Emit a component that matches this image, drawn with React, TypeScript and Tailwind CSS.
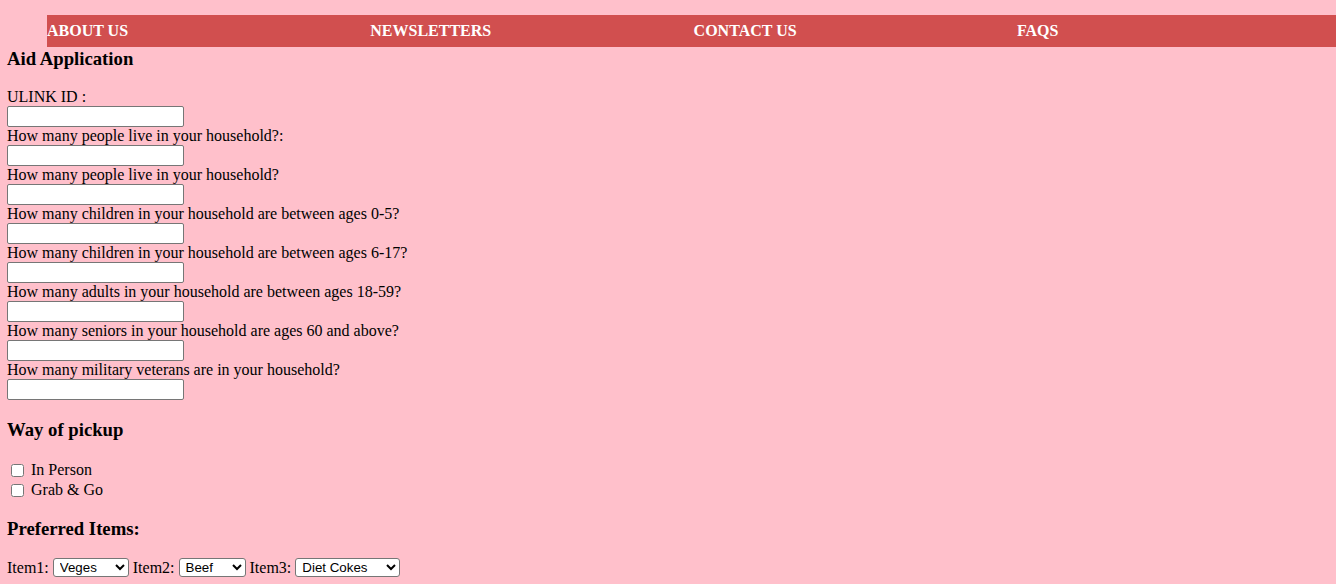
import React from 'react';

const navItems = ['ABOUT US', 'NEWSLETTERS', 'CONTACT US', 'FAQS'];

const questions = [
    'ULINK ID :',
    'How many people live in your household?:',
    'How many people live in your household?',
    'How many children in your household are between ages 0-5?',
    'How many children in your household are between ages 6-17?',
    'How many adults in your household are between ages 18-59?',
    'How many seniors in your household are ages 60 and above?',
    'How many military veterans are in your household?',
];

const Heading: React.FC<{ children: React.ReactNode; className?: string }> = ({ children, className = '' }) => (
    <h3 className={`text-[18.72px] font-bold leading-[21.5px] ${className}`}>{children}</h3>
);

const selectCls =
    'h-[19px] bg-white border border-[#767676] rounded-[3px] pl-[2px] text-[13.33px] text-black font-["Liberation_Sans",Arial,sans-serif] outline-none';

export default function App() {
    return (
        <div className="min-h-screen bg-[#ffc0cb] pl-[7px] pt-[15px] text-black font-['Liberation_Serif','Times_New_Roman',serif] text-[16px] leading-[18px]">
            <ul className="ml-[40px] flex h-[32px] items-center bg-[#d14f4f]">
                {navItems.map((item) => (
                    <li key={item} className="w-[323.3px] shrink-0 font-bold text-white">
                        {item}
                    </li>
                ))}
            </ul>

            <Heading className="mt-[1px]">Aid Application</Heading>

            <form className="mt-[18.7px] flex flex-col">
                {questions.map((q) => (
                    <div key={q} className="flex flex-col items-start">
                        <label className="block h-[18px]">{q}</label>
                        <input
                            type="text"
                            className="h-[21px] w-[177px] bg-white border border-[#767676] rounded-[2px] px-[2px] text-[13.33px]"
                        />
                    </div>
                ))}

                <Heading className="mt-[18.7px]">Way of pickup</Heading>

                <div className="mt-[20px] flex flex-col">
                    {['In Person', 'Grab & Go'].map((opt) => (
                        <label key={opt} className="flex h-[20px] items-center">
                            <input type="checkbox" className="m-[3px_3px_3px_4px] h-[13px] w-[13px]" />
                            <span className="ml-[4px]">{opt}</span>
                        </label>
                    ))}
                </div>

                <Heading className="mt-[17.5px]">Preferred Items:</Heading>

                <div className="mt-[19px] flex h-[19px] items-center">
                    <span>Item1:</span>
                    <select className={`${selectCls} ml-[4px] w-[76px]`} defaultValue="Veges">
                        <option>Veges</option>
                        <option>Fruits</option>
                    </select>
                    <span className="ml-[4px]">Item2:</span>
                    <select className={`${selectCls} ml-[4px] w-[67px]`} defaultValue="Beef">
                        <option>Beef</option>
                        <option>Chicken</option>
                    </select>
                    <span className="ml-[4px]">Item3:</span>
                    <select className={`${selectCls} ml-[4px] w-[105px]`} defaultValue="Diet Cokes">
                        <option>Diet Cokes</option>
                        <option>Water</option>
                    </select>
                </div>
            </form>
        </div>
    );
}
